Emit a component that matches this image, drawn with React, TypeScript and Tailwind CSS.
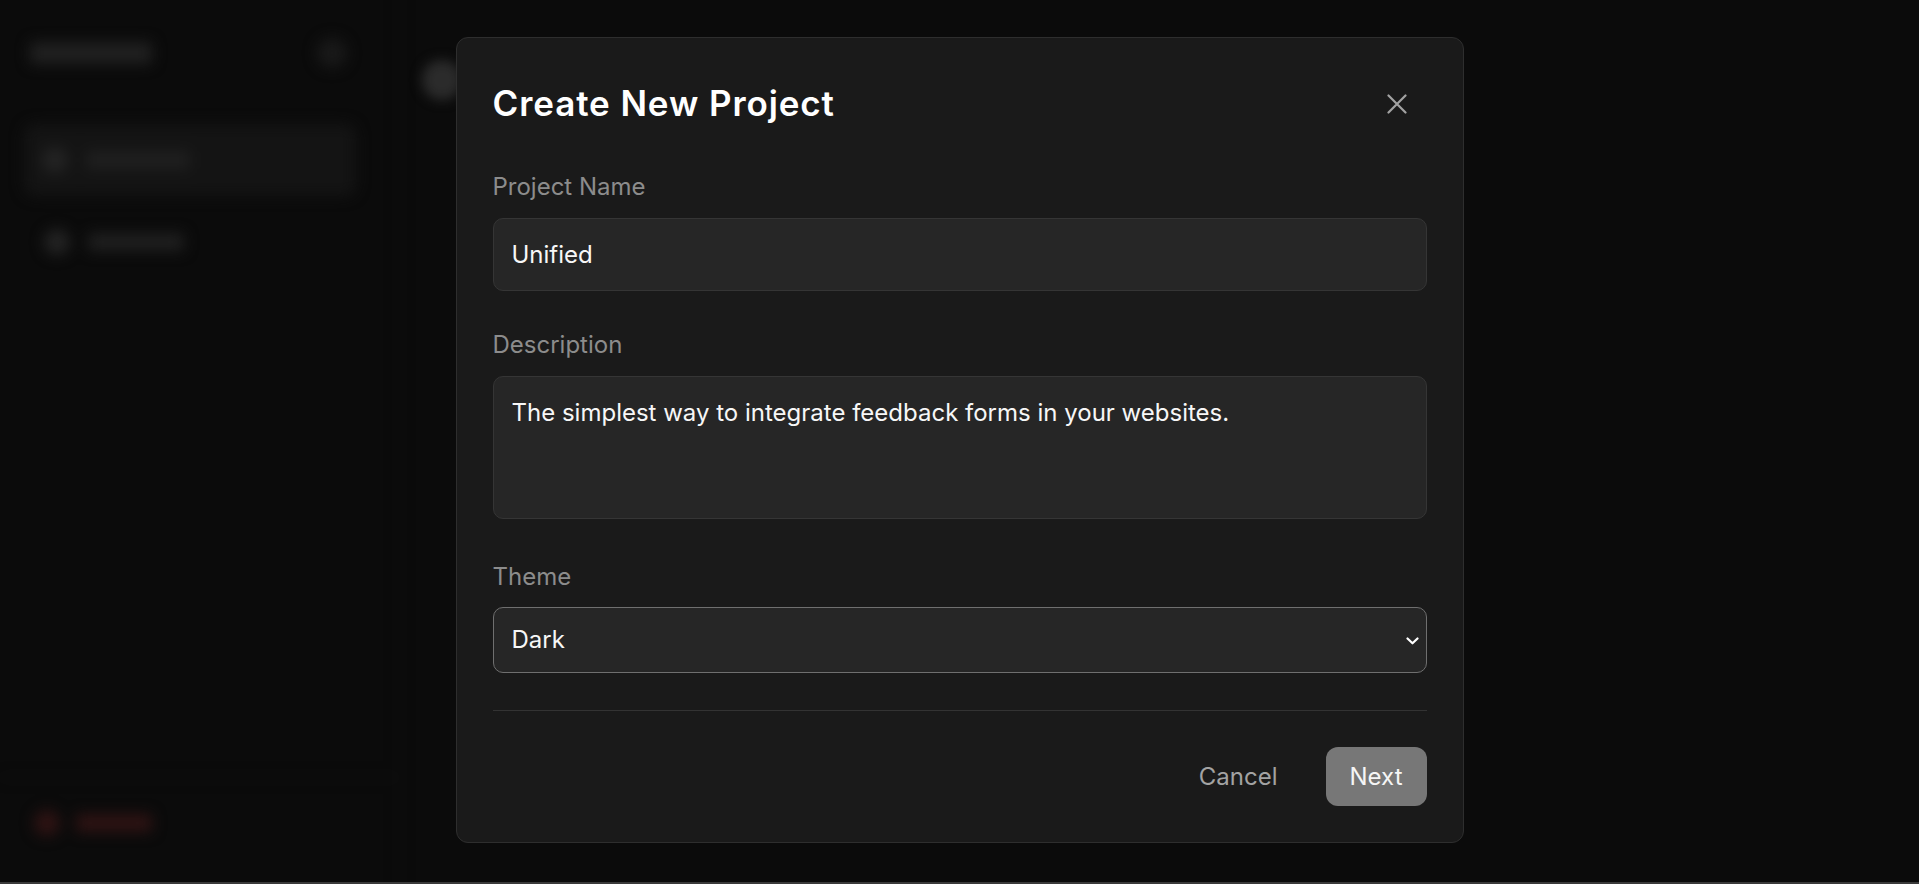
import { useState } from 'react';

function CloseIcon() {
  return (
    <svg width="20" height="20" viewBox="0 0 20 20" fill="none">
      <path d="M1.5 1.5L18.5 18.5M18.5 1.5L1.5 18.5" stroke="#a3a3a3" strokeWidth="2.2" strokeLinecap="round" />
    </svg>
  );
}

function Chevron() {
  return (
    <svg width="13" height="8" viewBox="0 0 13 8" fill="none">
      <path d="M1.5 1.5L6.5 6.3L11.5 1.5" stroke="#ffffff" strokeWidth="2.2" strokeLinecap="round" strokeLinejoin="round" />
    </svg>
  );
}

function Sidebar() {
  return (
    <aside className="flex h-full w-[400px] shrink-0 flex-col border-r border-[#101010] blur-[7px]">
      <div className="flex items-center justify-between pl-[30px] pr-[52px] pt-[38px]">
        <div className="h-[22px] w-[122px] rounded bg-[#202020]" />
        <div className="h-[30px] w-[30px] rounded-full bg-[#191919]" />
      </div>
      <nav className="mt-[56px] flex flex-col gap-[10px] px-[24px]">
        <div className="flex h-[72px] w-[332px] items-center gap-[18px] rounded-xl bg-[#141414] px-[18px]">
          <div className="h-[26px] w-[26px] rounded-full bg-[#232323]" />
          <div className="h-[18px] w-[104px] rounded bg-[#1f1f1f]" />
        </div>
        <div className="flex h-[72px] items-center gap-[18px] px-[20px]">
          <div className="h-[26px] w-[26px] rounded-full bg-[#232323]" />
          <div className="h-[18px] w-[96px] rounded bg-[#1f1f1f]" />
        </div>
      </nav>
      <div className="mt-auto border-t border-[#121212] px-[34px] pb-[48px] pt-[32px]">
        <div className="flex items-center gap-[16px]">
          <div className="h-[26px] w-[26px] rounded-full bg-[#2e1313]" />
          <div className="h-[18px] w-[76px] rounded bg-[#2e1313]" />
        </div>
      </div>
    </aside>
  );
}

function Field({ label, children, mb }: { label: string; children: React.ReactNode; mb: string }) {
  return (
    <div className={mb}>
      <label className="mb-[13px] block text-[24px] leading-[36px] text-[#8c8c8c]">{label}</label>
      {children}
    </div>
  );
}

export default function App() {
  const [name, setName] = useState('Unified');
  const [desc, setDesc] = useState('The simplest way to integrate feedback forms in your websites.');
  const [theme, setTheme] = useState('Dark');

  return (
    <div className="relative h-[884px] w-full overflow-hidden bg-[#0b0b0b] font-['Inter',sans-serif]">
      <div className="flex h-full">
        <Sidebar />
        <main className="flex-1 blur-[6px]">
          <div className="ml-[22px] mt-[60px] h-[40px] w-[40px] rounded-full bg-[#2b2b2b]" />
        </main>
      </div>

      <div className="absolute inset-0 flex justify-center pt-[37px]">
        <div className="h-fit w-[1008px] rounded-[12px] border border-[#2e2e2e] bg-[#1a1a1a] px-[36px] pb-[36px] pt-[45px]">
          <div className="mb-[45px] flex items-center justify-between">
            <h2 className="text-[35px] font-semibold leading-[41px] tracking-[0.9px] text-white">Create New Project</h2>
            <button className="mr-[10px] flex h-[40px] w-[40px] items-center justify-center">
              <CloseIcon />
            </button>
          </div>

          <Field label="Project Name" mb="mb-[36px]">
            <input
              value={name}
              onChange={(e) => setName(e.target.value)}
              className="block h-[73px] w-full rounded-[10px] border border-[#353535] bg-[#262626] px-[18px] text-[24px] leading-[36px] text-[#f7f7f7] outline-none"
            />
          </Field>

          <Field label="Description" mb="mb-[40px]">
            <textarea
              value={desc}
              onChange={(e) => setDesc(e.target.value)}
              className="block h-[143px] w-full resize-none rounded-[10px] border border-[#353535] bg-[#262626] px-[18px] py-[18px] text-[24px] leading-[36px] text-[#f7f7f7] outline-none"
            />
          </Field>

          <div className="mb-[37px]">
            <label className="mb-[12px] block text-[24px] leading-[36px] text-[#8c8c8c]">Theme</label>
            <div className="relative">
              <select
                value={theme}
                onChange={(e) => setTheme(e.target.value)}
                className="block h-[66px] w-full appearance-none rounded-[10px] border border-[#6f6f6f] bg-[#262626] px-[18px] text-[24px] leading-[36px] text-[#f7f7f7] outline-none"
              >
                <option>Dark</option>
                <option>Light</option>
              </select>
              <span className="pointer-events-none absolute right-[8px] top-[30px] flex">
                <Chevron />
              </span>
            </div>
          </div>

          <div className="mb-[36px] h-px bg-[#333333]" />

          <div className="flex items-center justify-end gap-[24px]">
            <button className="h-[59px] px-[24px] text-[24px] leading-[36px] text-[#a3a3a3]">Cancel</button>
            <button className="h-[59px] rounded-[12px] bg-[#777777] px-[24px] text-[24px] leading-[36px] text-[#f5f5f5]">Next</button>
          </div>
        </div>
      </div>

      <div className="absolute bottom-0 left-0 right-0 h-[2px] bg-[#3a3a3a]" />
    </div>
  );
}
